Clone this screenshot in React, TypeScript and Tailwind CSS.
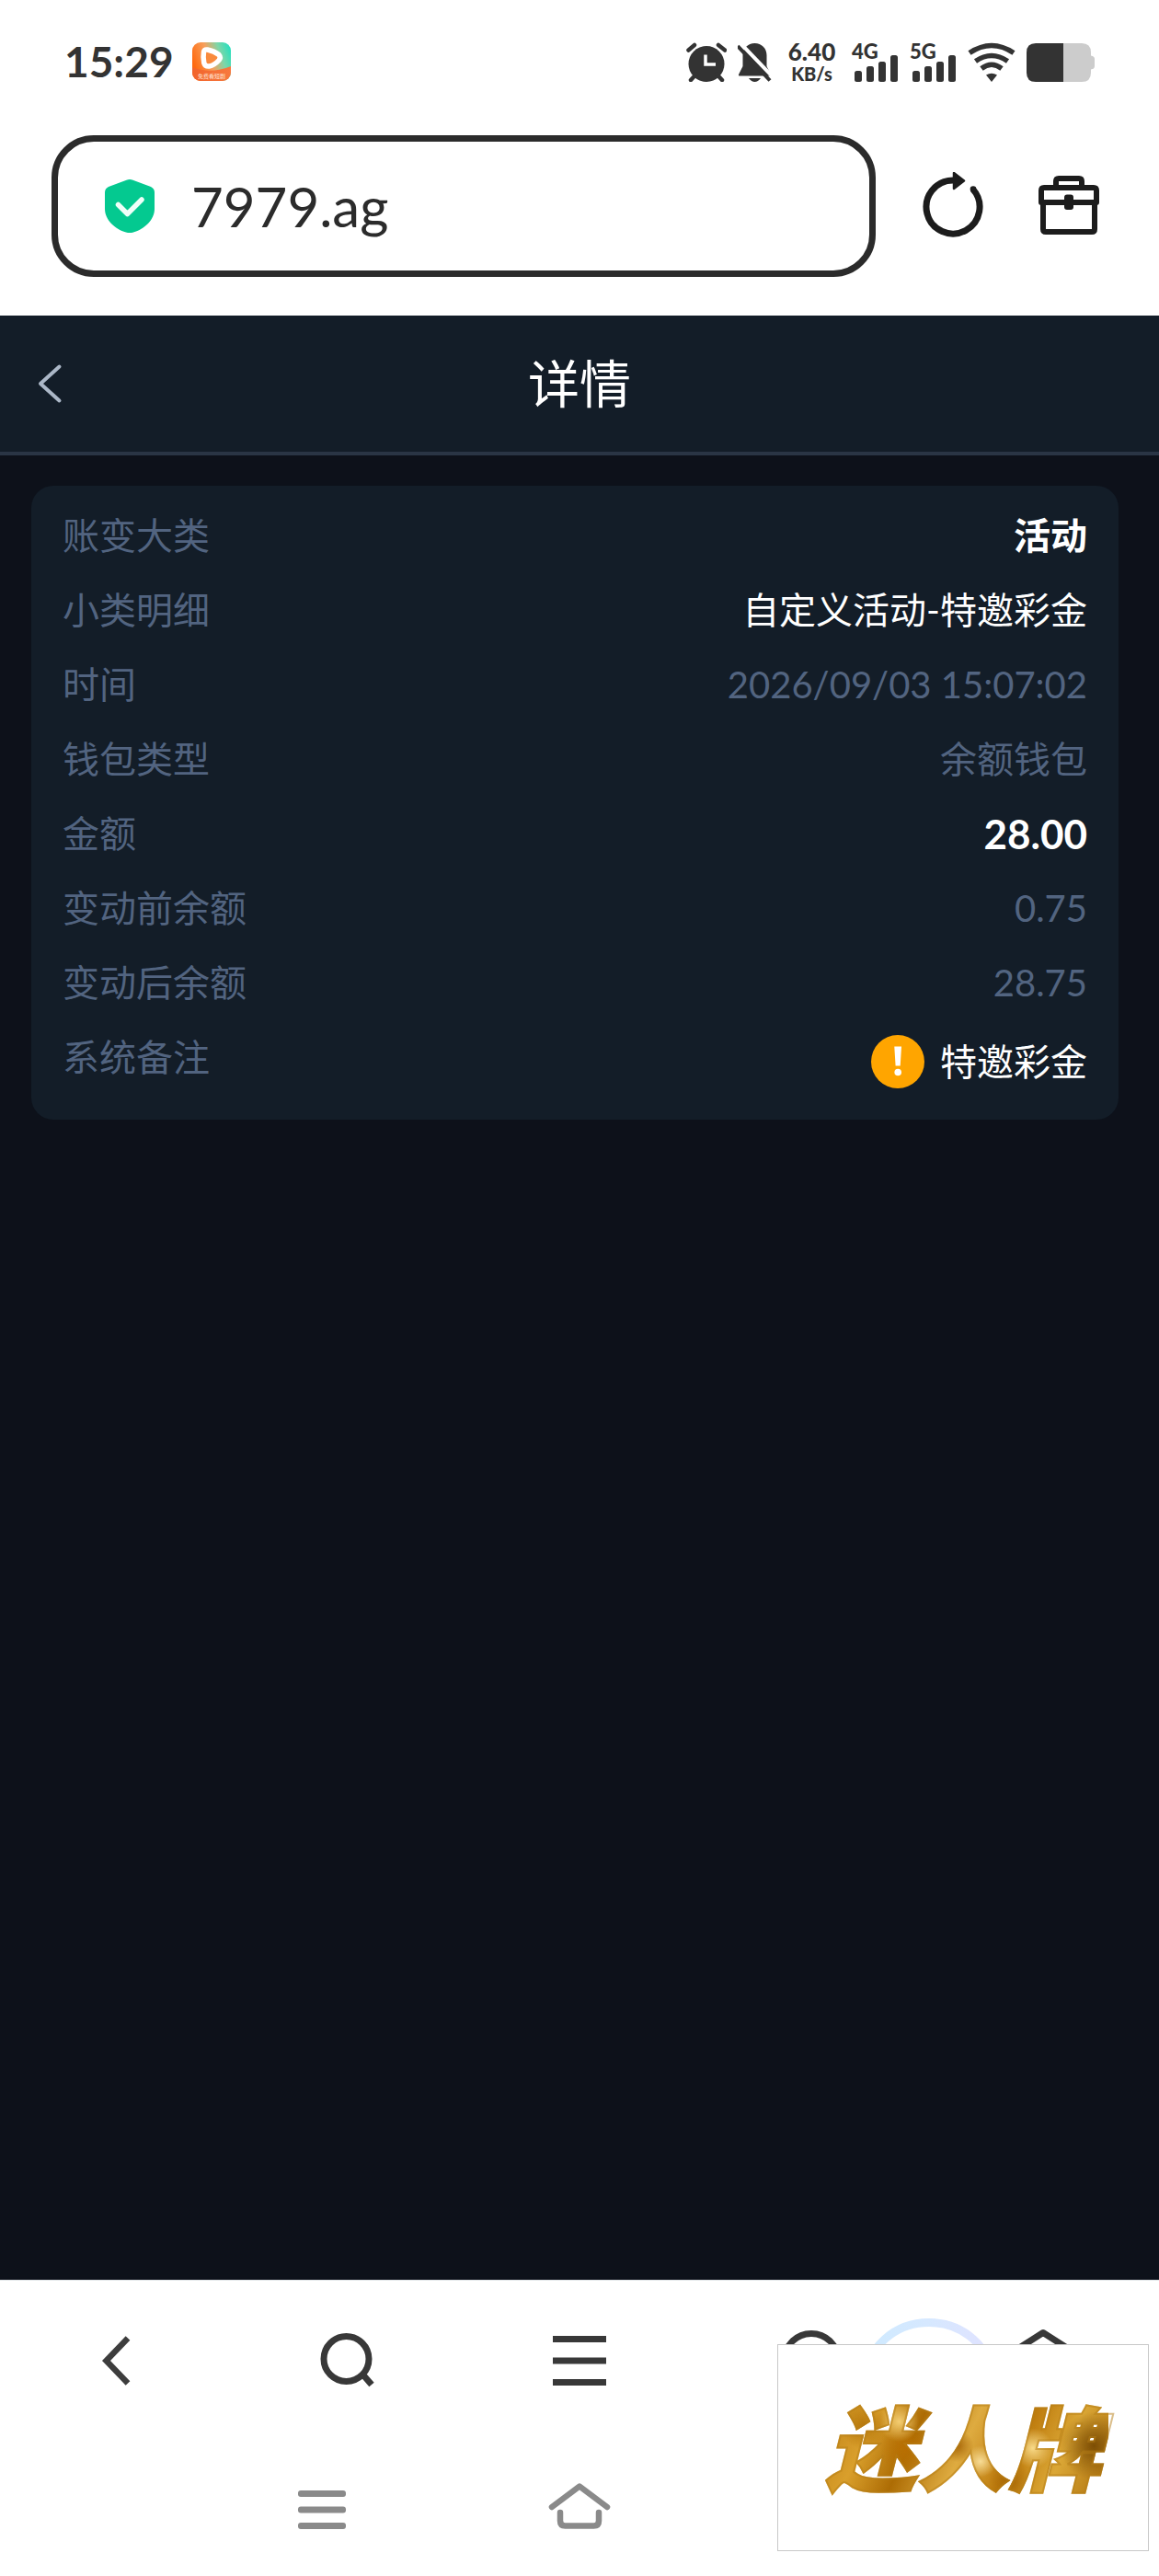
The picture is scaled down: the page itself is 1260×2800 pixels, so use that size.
import type { ReactNode } from "react";

type Detail = {
  label: string;
  value: ReactNode;
  tone: "strong" | "figure" | "bright" | "muted";
};

const tones = {
  strong: "font-bold text-white",
  figure: "text-[44px] font-bold text-white",
  bright: "text-white",
  muted: "text-[#526480]",
};

const details: Detail[] = [
  { label: "账变大类", value: "活动", tone: "strong" },
  { label: "小类明细", value: "自定义活动-特邀彩金", tone: "bright" },
  { label: "时间", value: "2026/09/03 15:07:02", tone: "muted" },
  { label: "钱包类型", value: "余额钱包", tone: "muted" },
  { label: "金额", value: "28.00", tone: "figure" },
  { label: "变动前余额", value: "0.75", tone: "muted" },
  { label: "变动后余额", value: "28.75", tone: "muted" },
];

function AppBadge() {
  return (
    <svg className="size-[42px]" viewBox="0 0 42 42" aria-hidden="true">
      <defs>
        <linearGradient id="badge" x1="0" y1="0.45" x2="1" y2="0.1">
          <stop offset="0" stopColor="#ff6a10" />
          <stop offset="0.4" stopColor="#f7a05c" />
          <stop offset="0.7" stopColor="#7fd6a8" />
          <stop offset="1" stopColor="#1fe0c0" />
        </linearGradient>
        <linearGradient id="badgeFoot" x1="0" y1="0" x2="1" y2="0">
          <stop offset="0" stopColor="#f2642c" />
          <stop offset="1" stopColor="#f7793f" />
        </linearGradient>
        <clipPath id="badgeClip">
          <rect width="42" height="42" rx="9" />
        </clipPath>
      </defs>
      <g clipPath="url(#badgeClip)">
        <rect width="42" height="42" fill="url(#badge)" />
        <path d="M0 27Q20 35 42 26V42H0Z" fill="url(#badgeFoot)" />
      </g>
      <path
        d="M12.500 10.500Q13 7.500 16.500 8Q24 9.500 29 13.500Q31.500 16.500 29 19.500Q24 25 18.500 26Q14 26.500 12.800 22.500Q11.500 16 12.500 10.500Z"
        fill="#f98a3d"
        stroke="#fff"
        strokeWidth="5.500"
        strokeLinejoin="round"
      />
      <text
        x="21"
        y="39"
        textAnchor="middle"
        fontSize="6"
        fill="#ffe3d2"
        fontFamily="Noto Sans CJK SC, sans-serif"
      >
        免费看短剧
      </text>
    </svg>
  );
}

function AlarmIcon() {
  return (
    <svg className="h-[43px] w-11" viewBox="16 25 44 43" aria-hidden="true">
      <circle cx="38" cy="48.500" r="19.500" fill="#333" />
      <path
        d="M18.500 33.500L25 28M51 28L58 33.500M21 66L27 59.500M49 59.500L55 66"
        stroke="#333"
        strokeWidth="4.500"
        strokeLinecap="round"
      />
      <path d="M37 38.500V49H48" fill="none" stroke="#fff" strokeWidth="3.500" />
    </svg>
  );
}

function MutedBellIcon() {
  return (
    <svg className="h-[43px] w-[37px]" viewBox="71 25 37 43" aria-hidden="true">
      <path
        d="M89.500 26C82 26 76.500 31.500 76.500 39V51L72 60Q71.500 61.500 73 61.500H106Q107.500 61.500 107 60L102.500 51V39C102.500 31.500 97 26 89.500 26Z"
        fill="#333"
      />
      <path d="M83 64H96Q93 68 89.500 68T83 64Z" fill="#333" />
      <path d="M74 26L110 63.500" stroke="#fff" strokeWidth="4" />
      <path d="M71 29L106 66.500" stroke="#333" strokeWidth="4" />
    </svg>
  );
}

function Signal({ name }: { name: string }) {
  return (
    <div className="grid h-[43px] w-[51px]">
      <span className="col-start-1 row-start-1 self-start text-[22px] leading-5 font-black">
        {name}
      </span>
      <svg
        className="col-start-1 row-start-1 h-[43px] w-[51px]"
        viewBox="0 0 51 43"
        fill="#333"
        aria-hidden="true"
      >
        <rect x="3" y="31" width="8" height="12" rx="2.500" />
        <rect x="16" y="26" width="8" height="17" rx="2.500" />
        <rect x="29" y="21" width="8" height="22" rx="2.500" />
        <rect x="42" y="14" width="8" height="29" rx="2.500" />
      </svg>
    </div>
  );
}

function WifiIcon() {
  return (
    <svg
      className="h-[43px] w-[52px]"
      viewBox="322.500 25 52 43"
      fill="none"
      stroke="#333"
      strokeWidth="5.500"
      aria-hidden="true"
    >
      <path d="M324.500 36.500Q348.500 20.500 372.500 36.500" />
      <path d="M331 45.500Q348.500 33.500 366 45.500" />
      <path d="M337.500 53.500Q348.500 45 359.500 53.500" />
      <path d="M342.500 60.500Q348.500 57 354.500 60.500L348.500 68Z" fill="#333" stroke="none" />
    </svg>
  );
}

function BatteryIcon() {
  return (
    <svg className="h-[43px] w-[74px]" viewBox="386 25 74 43" aria-hidden="true">
      <path
        d="M396 26H446Q456 26 456 36V39.500Q460 40 460 43V51Q460 54 456 54.500V58Q456 68 446 68H396Z"
        fill="#ccc"
      />
      <path d="M426 26H396Q386 26 386 36V58Q386 68 396 68H426Z" fill="#333" />
    </svg>
  );
}

function ShieldIcon() {
  return (
    <svg className="h-[58px] w-[54px] shrink-0" viewBox="74 65 54 58" aria-hidden="true">
      <path
        d="M97.500 65.700Q101 64.300 104.500 65.700L124 73Q128 75 128 79V97C128 109 117 119 105 122.500Q101 123.500 97 122.500C85 119 74 109 74 97V79Q74 75 78 73Z"
        fill="#04c990"
      />
      <path
        d="M88.500 92.500L98.500 102.500L114 87"
        fill="none"
        stroke="#effff9"
        strokeWidth="5.500"
        strokeLinejoin="round"
        strokeLinecap="round"
      />
    </svg>
  );
}

function ReloadIcon() {
  return (
    <svg className="h-[74px] w-[66px]" viewBox="103 57 66 74" aria-hidden="true">
      <path
        d="M157.500 75.500A29 29 0 1 1 136 66"
        fill="none"
        stroke="#1c1c1c"
        strokeWidth="7"
        strokeLinejoin="round"
      />
      <path
        d="M137 58L148 66.500L137 75Z"
        fill="#1c1c1c"
        stroke="#1c1c1c"
        strokeWidth="2.500"
        strokeLinejoin="round"
      />
      <circle cx="158" cy="75.500" r="3.300" fill="#1c1c1c" />
    </svg>
  );
}

function ToolboxIcon() {
  return (
    <svg
      className="h-[74px] w-[66px]"
      viewBox="229 57 66 74"
      fill="none"
      stroke="#1c1c1c"
      strokeWidth="6"
      strokeLinejoin="round"
      aria-hidden="true"
    >
      <path d="M248 72V67Q248 64 251 64H273Q276 64 276 67V72" />
      <path d="M232 90V77Q232 74 235 74H289Q292 74 292 77V90Z" />
      <path d="M234 92V119Q234 122 237 122H287Q290 122 290 119V92" />
      <rect x="257" y="81.500" width="10" height="16.500" rx="3" fill="#1c1c1c" stroke="none" />
    </svg>
  );
}

function StatusBar() {
  return (
    <div className="flex h-[134px] items-center justify-between px-[70px] text-[#333]">
      <div className="flex items-center gap-5">
        <time className="text-[46px] leading-none font-bold">15:29</time>
        <AppBadge />
      </div>
      <div className="flex items-center gap-3">
        <AlarmIcon />
        <MutedBellIcon />
        <div className="mx-1 flex w-[55px] flex-col items-center font-black">
          <span className="text-[26px] leading-[26px]">6.40</span>
          <span className="text-[20px] leading-[22px]">KB/s</span>
        </div>
        <Signal name="4G" />
        <Signal name="5G" />
        <WifiIcon />
        <BatteryIcon />
      </div>
    </div>
  );
}

function AddressBar() {
  return (
    <div className="mt-[13px] mb-[42px] flex items-center pr-[65px] pl-14">
      <label className="flex h-[154px] min-w-0 flex-1 items-center gap-10 rounded-[46px] border-[7px] border-[#2b2b2b] pr-10 pl-[51px]">
        <ShieldIcon />
        <input
          type="text"
          aria-label="网址"
          defaultValue="7979.ag"
          className="w-full min-w-0 bg-transparent text-[60px] leading-[80px] text-[#2b2b2b] outline-none"
        />
      </label>
      <button type="button" aria-label="刷新" className="ml-[51px]">
        <ReloadIcon />
      </button>
      <button type="button" aria-label="工具箱" className="ml-[60px]">
        <ToolboxIcon />
      </button>
    </div>
  );
}

function PageHeader() {
  return (
    <header className="grid h-[152px] grid-cols-[1fr_auto_1fr] items-center border-b-4 border-[#2a3545] bg-[#131d28]">
      <button type="button" aria-label="返回" className="justify-self-start pl-10">
        <svg className="h-11 w-7" viewBox="0 0 28 44" fill="none" aria-hidden="true">
          <path
            d="M24.500 3.500L4 22L24.500 40.500"
            stroke="#abb7c7"
            strokeWidth="4"
            strokeLinecap="round"
            strokeLinejoin="round"
          />
        </svg>
      </button>
      <h1 className="text-[56px] leading-[80px] text-white">详情</h1>
    </header>
  );
}

function DetailCard() {
  return (
    <dl className="mr-11 ml-[34px] flex flex-col gap-5 rounded-3xl bg-[#131d28] px-[34px] pt-6 pb-7 text-[40px] leading-[61px] text-[#526480]">
      {details.map((item) => (
        <div key={item.label} className="flex h-[61px] items-center justify-between">
          <dt>{item.label}</dt>
          <dd className={tones[item.tone]}>{item.value}</dd>
        </div>
      ))}
      <div className="flex items-start justify-between">
        <dt>系统备注</dt>
        <dd className="flex h-[70px] items-center gap-[17px] text-white">
          <svg className="size-[58px]" viewBox="0 0 58 58" aria-hidden="true">
            <circle cx="29" cy="29" r="29" fill="#ffa500" />
            <path d="M25.300 12.500H33L31.700 33.500H26.600Z" fill="#fff" />
            <circle cx="29.200" cy="40.500" r="3.800" fill="#fff" />
          </svg>
          特邀彩金
        </dd>
      </div>
    </dl>
  );
}

function BrowserNav() {
  return (
    <nav aria-label="浏览器" className="grid h-[174px] grid-cols-5 place-items-center">
      <button type="button" aria-label="后退">
        <svg className="size-[60px]" viewBox="96 2536 60 60" fill="none" aria-hidden="true">
          <path d="M139 2541.500L115.500 2566L139 2590.500" stroke="#3d3d3d" strokeWidth="6.500" />
        </svg>
      </button>
      <button type="button" aria-label="搜索">
        <svg className="size-[60px]" viewBox="348 2536 60 60" fill="none" aria-hidden="true">
          <circle cx="376.500" cy="2564" r="24.500" stroke="#383838" strokeWidth="7" />
          <path d="M394 2580.500L404 2592" stroke="#383838" strokeWidth="7" />
        </svg>
      </button>
      <button type="button" aria-label="菜单">
        <svg className="size-[60px]" viewBox="600 2536 60 60" fill="none" aria-hidden="true">
          <path
            d="M601 2542.500H659M601 2566H659M601 2589.500H659"
            stroke="#383838"
            strokeWidth="7"
          />
        </svg>
      </button>
      <button type="button" aria-label="个人中心">
        <svg className="size-[66px]" viewBox="0 0 66 66" fill="none" aria-hidden="true">
          <circle cx="33" cy="33" r="29.500" stroke="#383838" strokeWidth="7" />
        </svg>
      </button>
      <button type="button" aria-label="主页">
        <svg className="h-[70px] w-[66px]" viewBox="0 0 66 70" fill="none" aria-hidden="true">
          <path
            d="M4 23L33 4.500L62 23V64H4Z"
            stroke="#383838"
            strokeWidth="7"
            strokeLinejoin="round"
          />
        </svg>
      </button>
    </nav>
  );
}

function SystemNav() {
  return (
    <nav aria-label="系统" className="flex h-[147px] items-center justify-center gap-[212px]">
      <button type="button" aria-label="最近任务">
        <svg className="h-[52px] w-[68px]" viewBox="0 0 68 52" fill="#8a8a8a" aria-hidden="true">
          <rect x="8" y="6" width="52" height="7" rx="3" />
          <rect x="8" y="23.500" width="52" height="7" rx="3" />
          <rect x="8" y="41" width="52" height="7" rx="3" />
        </svg>
      </button>
      <button type="button" aria-label="桌面">
        <svg
          className="h-[52px] w-[68px]"
          viewBox="596 2700 68 52"
          fill="none"
          stroke="#8a8a8a"
          strokeWidth="6.500"
          strokeLinecap="round"
          strokeLinejoin="round"
          overflow="visible"
          aria-hidden="true"
        >
          <path d="M600 2724L630 2701.500L660 2724" />
          <path d="M609 2730V2739Q609 2744.500 614.500 2744.500H645.500Q651 2744.500 651 2739V2730" />
        </svg>
      </button>
      <button type="button" aria-label="上一步">
        <svg className="h-[52px] w-[68px]" viewBox="0 0 68 52" fill="none" aria-hidden="true">
          <path d="M44 4L20 26L44 48" stroke="#8a8a8a" strokeWidth="6.500" strokeLinecap="round" />
        </svg>
      </button>
    </nav>
  );
}

function FloatingBubble() {
  return (
    <svg
      className="absolute top-[41px] right-[177px] h-[132px] w-[146px]"
      viewBox="0 0 146 132"
      fill="none"
      aria-hidden="true"
    >
      <defs>
        <linearGradient id="bubble" x1="0" y1="0" x2="1" y2="0">
          <stop offset="0" stopColor="#cfeaff" />
          <stop offset="0.5" stopColor="#d6e8ff" />
          <stop offset="1" stopColor="#e0e2ff" />
        </linearGradient>
      </defs>
      <ellipse cx="73" cy="66" rx="68" ry="61.500" stroke="url(#bubble)" strokeWidth="9" />
    </svg>
  );
}

function BrandStamp() {
  return (
    <div className="absolute right-[11px] bottom-[27px] flex h-[225px] w-[404px] items-center justify-center border border-[#c8c8c8] bg-white">
      <span className="bg-[radial-gradient(circle_at_16%_30%,#b5760a_0,transparent_9%),radial-gradient(circle_at_28%_26%,#f3cd72_0,transparent_9%),radial-gradient(circle_at_30%_50%,#b86f02_0,transparent_12%),radial-gradient(circle_at_48%_48%,#a9690a_0,transparent_10%),radial-gradient(circle_at_56%_62%,#f7dc96_0,transparent_9%),radial-gradient(circle_at_74%_50%,#f8da88_0,transparent_9%),radial-gradient(circle_at_95%_48%,#7d4e04_0,transparent_12%),radial-gradient(circle_at_66%_80%,#a86806_0,transparent_10%),linear-gradient(115deg,#b97a10,#d99f2c_20%,#ad6c04_34%,#deab40_50%,#bd7a0c_66%,#dba736_80%,#a96c0a)] bg-clip-text px-2 text-[100px] leading-[120px] font-black text-transparent italic [-webkit-text-stroke:2px_#b67d1680]">
        迷人牌
      </span>
    </div>
  );
}

export default function App() {
  return (
    <div className="relative flex min-h-screen flex-col bg-white font-[Lato,'Noto_Sans_CJK_SC',sans-serif]">
      <StatusBar />
      <AddressBar />
      <main className="flex flex-1 flex-col gap-[33px] bg-[#0d111a]">
        <PageHeader />
        <DetailCard />
      </main>
      <footer className="relative border-t border-[#e2e6ea]">
        <BrowserNav />
        <SystemNav />
        <FloatingBubble />
      </footer>
      <BrandStamp />
    </div>
  );
}
